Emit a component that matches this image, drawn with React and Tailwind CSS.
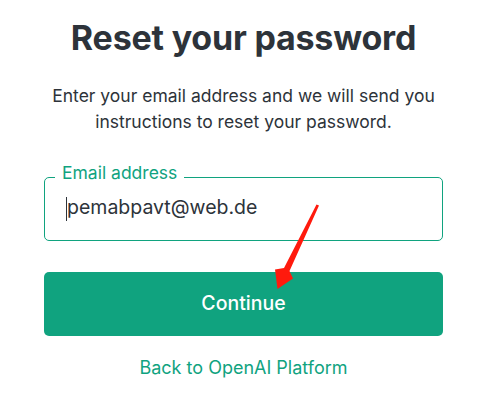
import React from "react";

function Arrow() {
  return (
    <svg
      className="absolute left-0 top-0 pointer-events-none"
      width="494"
      height="409"
      viewBox="0 0 494 409"
    >
      <polygon
        points="316.5,204.5 319,205.5 289.5,271 293,278.5 277.5,289 275,269.5 284,268"
        fill="#ff1a0d"
      />
    </svg>
  );
}

export default function App() {
  return (
    <div className="relative w-[494px] h-[409px] bg-white font-['Inter',sans-serif] text-[#2d333a] overflow-hidden">
      <div className="flex flex-col items-center pt-[18px] pr-[7px]">
        <h1 className="text-[34px] font-bold leading-[40px] tracking-[-0.2px]">
          Reset your password
        </h1>
        <p className="mt-[25px] text-[17.5px] leading-[26px] text-center w-[400px]">
          Enter your email address and we will send you instructions to reset
          your password.
        </p>

        <div className="relative mt-[42px] w-[399px] h-[64px] border border-[#10a37f] rounded-[5px] flex items-center pl-[21px] pb-[4px]">
          <span className="absolute left-[10px] top-[-17px] bg-white px-[7px] text-[17.5px] leading-[24px] text-[#10a37f]">
            Email address
          </span>
          <span className="w-[1px] h-[24px] mt-[4px] bg-[#2d333a]" />
          <span className="text-[19.5px] leading-[24px]">pemabpavt@web.de</span>
        </div>

        <button className="mt-[31px] w-[399px] h-[64px] rounded-[5px] bg-[#10a37f] text-white text-[19.5px] font-medium">
          Continue
        </button>

        <a className="mt-[20px] text-[18px] leading-[24px] text-[#10a37f]">
          Back to OpenAI Platform
        </a>
      </div>
      <Arrow />
    </div>
  );
}
